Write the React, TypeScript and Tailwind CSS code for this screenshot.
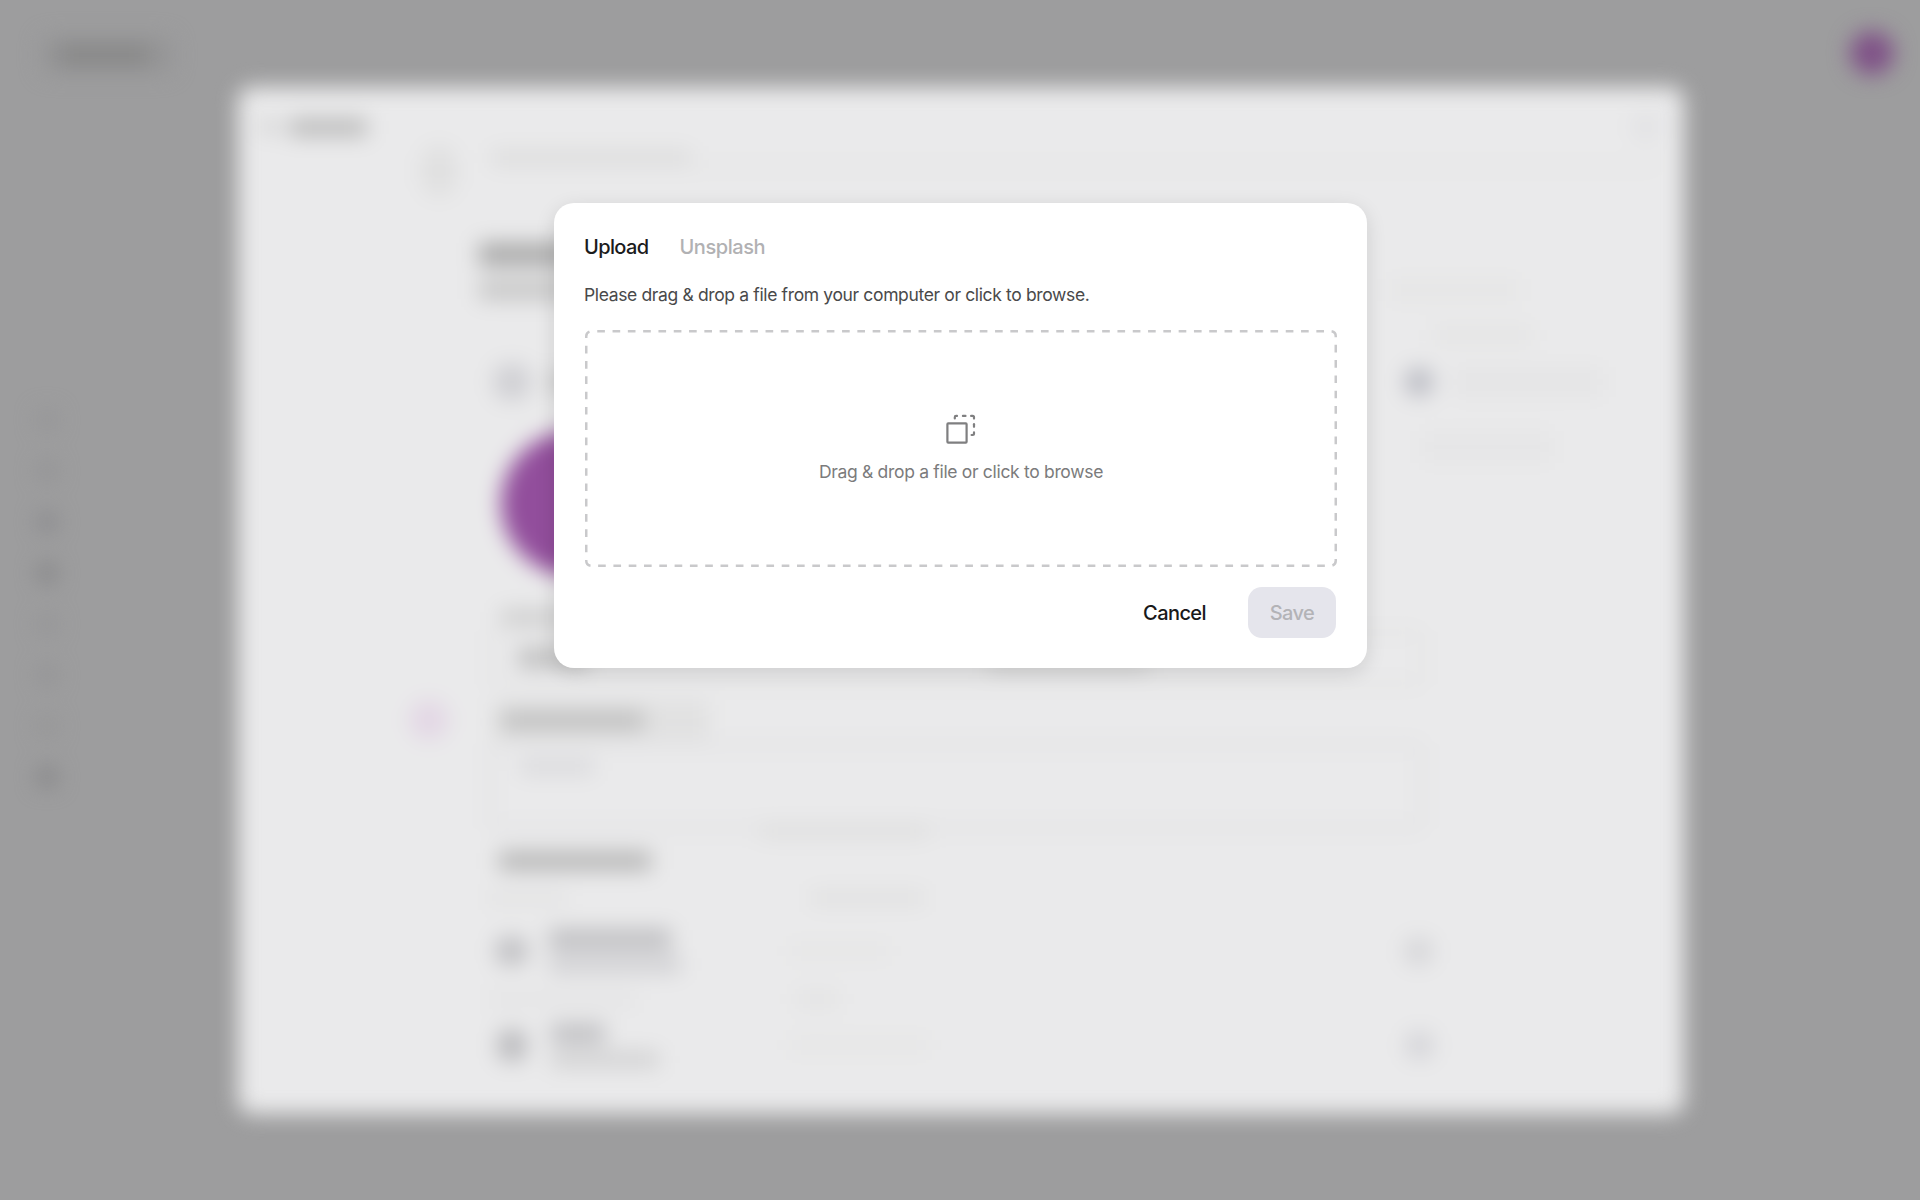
import React from 'react';

interface BarProps {
    className: string;
}

const Bar: React.FC<BarProps> = ({ className }) => <div className={`shrink-0 ${className}`} />;

const navItems = [
    'bg-[#949496]',
    'bg-[#929294]',
    'bg-[#88888b]',
    'bg-[#838385]',
    'bg-[#949496]',
    'bg-[#929294]',
    'bg-[#959596]',
    'bg-[#838385]',
];

const SideNav: React.FC = () => (
    <div className="w-[238px] shrink-0 flex flex-col gap-[33px] pl-[38px] pt-[324px]">
        {navItems.map((color, idx) => (
            <Bar key={idx} className={`w-[18px] h-[18px] rounded ${color}`} />
        ))}
    </div>
);

const SettingsPanel: React.FC = () => (
    <div className="w-[1446px] h-[1027px] shrink-0 rounded-[14px] bg-[#eaeaeb] flex flex-col overflow-hidden">
        {/* title bar */}
        <div className="h-[58px] pt-[22px] flex items-center shrink-0">
            <Bar className="ml-[24px] w-[14px] h-[12px] bg-[#c8c8c8]" />
            <Bar className="ml-[13px] w-[78px] h-[17px] bg-[#b8b8b8]" />
            <Bar className="ml-auto mr-[22px] w-[32px] h-[32px] rounded-full bg-[#e3e3e5]" />
        </div>
        <div className="h-[56px] flex shrink-0">
            <Bar className="ml-[183px] w-[36px] h-[52px] rounded-full bg-[#e0e0e0]" />
            <Bar className="ml-[34px] mt-[5px] w-[200px] h-[16px] bg-[#dddddd]" />
            <Bar className="mt-[20px] w-[970px] h-[3px] bg-[#dfdfdf]" />
        </div>

        {/* profile heading */}
        <div className="mt-[36px] h-[34px] flex items-center shrink-0">
            <Bar className="ml-[241px] w-[200px] h-[23px] bg-[#a9a9a9]" />
        </div>
        <div className="mt-[7px] h-[24px] flex items-center shrink-0">
            <Bar className="ml-[241px] w-[240px] h-[20px] bg-[#c6c6c6]" />
            <Bar className="ml-[670px] w-[130px] h-[22px] bg-[#e6e6e6]" />
        </div>

        {/* picture section */}
        <div className="mt-[25px] h-[16px] flex items-center shrink-0">
            <Bar className="ml-[1195px] w-[100px] h-[16px] bg-[#e4e4e4]" />
        </div>
        <div className="mt-[19px] h-[40px] flex items-center shrink-0">
            <Bar className="ml-[256px] w-[36px] h-[36px] rounded-xl bg-[#d0d0d4]" />
            <Bar className="ml-[20px] w-[120px] h-[20px] bg-[#c8c8c8]" />
            <Bar className="ml-[735px] w-[28px] h-[28px] rounded-xl bg-[#bbbcc4]" />
            <Bar className="ml-[20px] w-[150px] h-[30px] bg-[#e5e5e6]" />
        </div>
        <div className="mt-[29px] h-[149px] flex shrink-0">
            <Bar className="ml-[263px] w-[145px] h-[145px] rounded-full bg-[#924e9c]" />
            <Bar className="ml-[776px] w-[130px] h-[32px] bg-[#e6e6e7]" />
        </div>

        {/* name field */}
        <div className="mt-[27px] h-[20px] flex items-center shrink-0">
            <Bar className="ml-[263px] w-[100px] h-[14px] bg-[#cacaca]" />
        </div>
        <div className="mt-[4px] ml-[251px] w-[934px] h-[54px] border-[3px] border-[#dcdcdc] rounded-lg flex items-center shrink-0">
            <Bar className="ml-[26px] w-[70px] h-[18px] bg-[#bbbbbb]" />
            <Bar className="ml-[400px] mt-[12px] w-[160px] h-[14px] bg-[#d3d3d3]" />
        </div>

        {/* bio field */}
        <div className="mt-[12px] h-[46px] flex items-center shrink-0">
            <Bar className="ml-[171px] w-[40px] h-[40px] rounded-full bg-[#e3d7e5]" />
            <div className="ml-[44px] w-[216px] h-[38px] pl-[9px] bg-[#e1e1e1] flex items-center">
                <Bar className="w-[142px] h-[17px] bg-[#bcbcbc]" />
            </div>
        </div>
        <div className="ml-[251px] w-[934px] h-[86px] border-[3px] border-[#d8d8db] rounded-lg shrink-0">
            <Bar className="ml-[28px] mt-[14px] w-[74px] h-[14px] bg-[#d8d8db]" />
        </div>
        <Bar className="-mt-[5px] ml-[522px] w-[168px] h-[14px] bg-[#dedede]" />

        {/* social rows */}
        <div className="mt-[12px] h-[22px] flex items-center shrink-0">
            <Bar className="ml-[261px] w-[152px] h-[18px] bg-[#b3b3b3]" />
        </div>
        <div className="mt-[18px] h-[16px] flex items-center shrink-0">
            <Bar className="ml-[249px] w-[80px] h-[12px] bg-[#e2e2e2]" />
            <Bar className="ml-[243px] w-[115px] h-[14px] bg-[#e0e0e0]" />
        </div>
        <div className="mt-[15px] h-[60px] flex items-center shrink-0">
            <Bar className="ml-[258px] w-[31px] h-[28px] rounded-lg bg-[#c1c1c4]" />
            <div className="ml-[22px] w-[140px] flex flex-col gap-[7px]">
                <Bar className="w-[122px] h-[20px] bg-[#bebec1]" />
                <Bar className="w-[132px] h-[17px] bg-[#d0d0d3]" />
            </div>
            <Bar className="ml-[100px] w-[100px] h-[16px] bg-[#e6e6e6]" />
            <Bar className="ml-[516px] w-[27px] h-[27px] rounded-lg bg-[#d6d6d9]" />
        </div>
        <div className="mt-[9px] h-[18px] flex items-center shrink-0">
            <Bar className="ml-[249px] w-[150px] h-[14px] bg-[#e4e4e5]" />
            <Bar className="ml-[158px] w-[44px] h-[16px] bg-[#e3e3e3]" />
        </div>
        <div className="mt-[7px] h-[60px] flex items-center shrink-0">
            <Bar className="ml-[260px] w-[28px] h-[31px] rounded-lg bg-[#bababd]" />
            <div className="ml-[25px] w-[138px] flex flex-col gap-[9px]">
                <Bar className="w-[54px] h-[19px] bg-[#bebec1]" />
                <Bar className="w-[108px] h-[15px] bg-[#cfcfd0]" />
            </div>
            <Bar className="ml-[100px] w-[140px] h-[16px] bg-[#e6e6e6]" />
            <Bar className="ml-[477px] w-[27px] h-[27px] rounded-lg bg-[#d5d5d9]" />
        </div>
    </div>
);

const BlurredPage: React.FC = () => (
    <div className="h-full flex flex-col blur-[10.5px]">
        <div className="h-[87px] px-[26px] flex items-center justify-between shrink-0">
            <div className="ml-[16px] mt-[22px] w-[130px] h-[36px] rounded-lg bg-[#959596] flex items-center pl-[18px]">
                <Bar className="w-[88px] h-[18px] bg-[#868686]" />
            </div>
            <Bar className="mt-[19px] w-[44px] h-[44px] rounded-full bg-[#7f5187]" />
        </div>
        <div className="flex">
            <SideNav />
            <SettingsPanel />
        </div>
    </div>
);

const CopyIcon: React.FC = () => (
    <svg width="32" height="32" viewBox="0 0 32 32" fill="none" stroke="#7f7f80" strokeWidth="2.2" strokeLinecap="round" strokeLinejoin="round">
        <rect x="2.4" y="10.4" width="19.2" height="19.2" rx="0.8" />
        <path d="M9.8 5.4V4.2Q9.8 2.9 11.1 2.9H12" />
        <path d="M17.9 2.9H20.5" />
        <path d="M26.1 2.9H27.6Q29 2.9 29 4.3V5.6" />
        <path d="M29 11.2V13.8" />
        <path d="M29 19.4V20.6Q29 22 27.6 22H26.6" />
    </svg>
);

const Dropzone: React.FC = () => (
    <div className="relative w-[752px] h-[237px] flex flex-col items-center pt-[83px]">
        <svg className="absolute inset-0" width="752" height="237" fill="none">
            <rect x="1.25" y="1.25" width="749.5" height="234.5" rx="5" stroke="#c9c9cb" strokeWidth="2.5" strokeDasharray="7.65 7.65" strokeDashoffset="-6" />
        </svg>
        <CopyIcon />
        <p className="mt-[15px] text-[17.5px] leading-[24px] tracking-[-0.018em] text-[#7b7b7c] whitespace-nowrap">
            Drag &amp; drop a file or click to browse
        </p>
    </div>
);

const UploadModal: React.FC = () => (
    <div className="w-[813px] h-[465px] rounded-[20px] bg-white px-[31px] pt-[30px] shadow-[0_5px_20px_rgba(0,0,0,0.12)] flex flex-col">
        <div className="flex items-center gap-[31px] h-[28px] -ml-px text-[20px] font-[550]">
            <button className="text-[#1b1b1c] tracking-[-0.031em]">Upload</button>
            <button className="text-[#b1b1b3] tracking-[-0.022em]">Unsplash</button>
        </div>
        <p className="mt-[22px] h-[24px] -ml-px text-[17.5px] leading-[24px] tracking-[-0.0205em] text-[#49494a] whitespace-nowrap">
            Please drag &amp; drop a file from your computer or click to browse.
        </p>
        <div className="mt-[23px]">
            <Dropzone />
        </div>
        <div className="mt-[20px] flex justify-end items-center gap-[42px] text-[20px] font-[550] tracking-[-0.029em]">
            <button className="text-[#19191a]">Cancel</button>
            <button className="w-[88px] h-[51px] rounded-[14px] bg-[#e5e5ec] text-[#b3b3b7]">Save</button>
        </div>
    </div>
);

export default function App() {
    return (
        <div className="relative w-[1920px] h-[1200px] overflow-hidden bg-[#9d9d9e] font-['Inter',sans-serif]">
            <BlurredPage />
            <div className="absolute inset-0 pt-[203px] pl-px flex justify-center items-start">
                <UploadModal />
            </div>
        </div>
    );
}
